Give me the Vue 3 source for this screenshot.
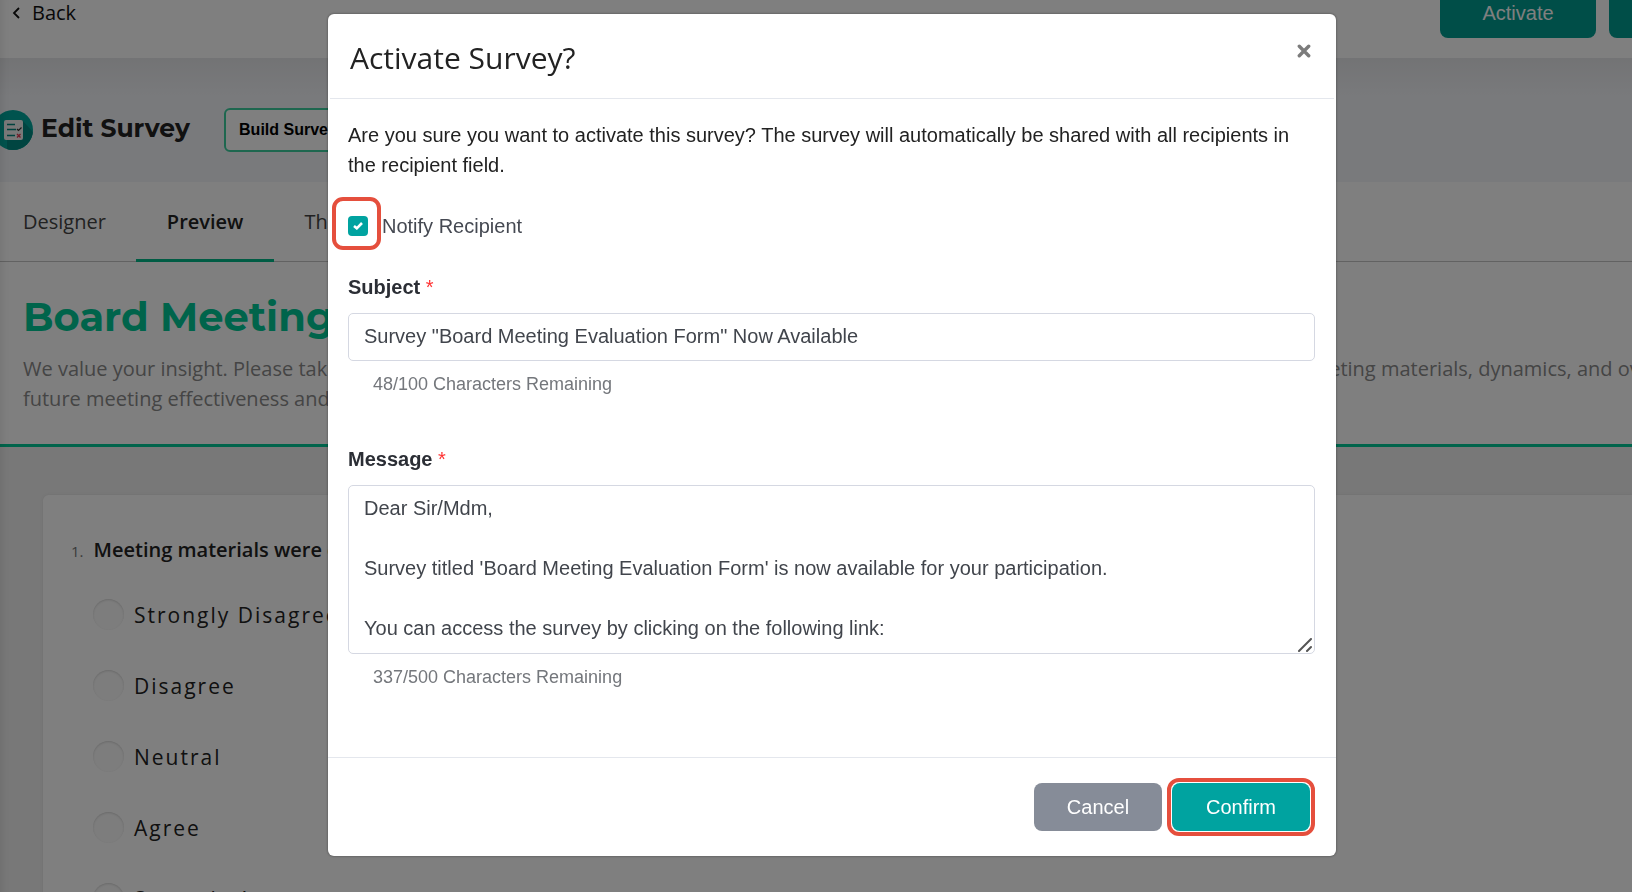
<script setup>
import { ref } from 'vue'

const notify = ref(true)
const subject = ref('Survey "Board Meeting Evaluation Form" Now Available')
const message = ref(
  "Dear Sir/Mdm,\n\nSurvey titled 'Board Meeting Evaluation Form' is now available for your participation.\n\nYou can access the survey by clicking on the following link:"
)
const answers = ['Strongly Disagree', 'Disagree', 'Neutral', 'Agree', 'Strongly Agree']
</script>

<template>
  <div class="page">
    <header class="topbar">
      <a class="back" href="#">
        <svg width="8" height="12" viewBox="0 0 8 12" fill="none" stroke="currentColor" stroke-width="1.800"><path d="M7 1 2 6 7 11" /></svg>
        Back
      </a>
      <div class="actions">
        <button class="btn teal" type="button">Activate</button>
        <button class="btn teal" type="button" aria-label="More actions"></button>
      </div>
    </header>

    <section class="band">
      <svg class="logo" width="40" height="40" viewBox="0 0 40 40">
        <defs><clipPath id="disc"><circle cx="20" cy="20" r="20" /></clipPath></defs>
        <g clip-path="url(#disc)">
          <rect width="40" height="40" fill="#00a69c" />
          <path d="M29 10 40 22V40H14V30Z" fill="#008a82" />
          <rect x="11" y="10" width="19" height="20" rx="2" fill="#f2f2f2" />
          <path d="M14 14.500h8M14 19.500h9M14 25.500h8" stroke="#00857d" stroke-width="1.500" fill="none" />
          <path d="m24 19 1.500 1.500 3-3" stroke="#333" stroke-width="1.200" fill="none" />
          <path d="m24 24 3.500 3.500m0-3.500L24 27.500" stroke="#e2344f" stroke-width="1.300" fill="none" />
        </g>
      </svg>
      <h1>Edit Survey</h1>
      <button class="build" type="button">Build Survey</button>
    </section>

    <nav class="tabs">
      <a href="#">Designer</a>
      <a href="#" class="active">Preview</a>
      <a href="#">Theme</a>
    </nav>

    <section class="intro">
      <h2>Board Meeting Evaluation Form</h2>
      <p>
        We value your insight. Please take a few minutes to complete the evaluation form today. Your feedback will help us to improve the board meeting materials, dynamics, and overall<br />
        future meeting effectiveness and governance.
      </p>
    </section>

    <section class="questions">
      <fieldset class="card">
        <legend><span>1.</span>Meeting materials were clear</legend>
        <label v-for="a in answers" :key="a" class="answer">
          <input type="radio" name="q1" :value="a" />{{ a }}
        </label>
      </fieldset>
    </section>
  </div>

  <div class="overlay">
    <div class="dialog" role="dialog" aria-modal="true" aria-labelledby="dialog-title">
      <header class="dialog-head">
        <h3 id="dialog-title">Activate Survey?</h3>
        <button class="close" type="button" aria-label="Close dialog">
          <svg width="14" height="14" viewBox="0 0 14 14" stroke="currentColor" stroke-width="3.400" stroke-linecap="round"><path d="m2.300 2.300 9.400 9.400m0-9.400-9.400 9.400" /></svg>
        </button>
      </header>

      <div class="dialog-body">
        <p>Are you sure you want to activate this survey? The survey will automatically be shared with all recipients in the recipient field.</p>

        <div class="notify">
          <span class="tick">
            <input id="notify" v-model="notify" type="checkbox" />
            <svg v-if="notify" width="10" height="8" viewBox="0 0 10 8" fill="none" stroke="#fff" stroke-width="2.600"><path d="M1 4 3.800 6.300 9 1" /></svg>
          </span>
          <label for="notify">Notify Recipient</label>
        </div>

        <label class="name" for="subject">Subject <span>*</span></label>
        <input id="subject" v-model="subject" class="field" type="text" />
        <p class="hint">48/100 Characters Remaining</p>

        <label class="name" for="message">Message <span>*</span></label>
        <div class="area">
          <textarea id="message" v-model="message" class="field"></textarea>
          <svg width="14" height="14" viewBox="0 0 14 14" stroke="#555" stroke-width="2" stroke-linecap="round"><path d="M1 13 13 1M9 13l4-4" /></svg>
        </div>
        <p class="hint">337/500 Characters Remaining</p>
      </div>

      <footer class="dialog-foot">
        <button class="btn grey" type="button">Cancel</button>
        <span class="ring"><button class="btn teal" type="button">Confirm</button></span>
      </footer>
    </div>
  </div>
</template>

<style>
body {
  overflow: hidden;
}
</style>

<style scoped>
* {
  box-sizing: border-box;
}
h1, h2, h3, p {
  margin: 0;
}
button, input, textarea {
  font-family: inherit;
}
.page {
  height: 100vh;
  overflow: hidden;
  background: #fff;
  color: #222;
  font-family: "Open Sans", "Noto Sans", sans-serif;
  font-size: 20px;
}
.topbar {
  height: 58px;
  padding: 0 0 20px 12px;
  display: flex;
  align-items: flex-end;
  justify-content: space-between;
}
.back {
  display: flex;
  align-items: center;
  gap: 12px;
  line-height: 30px;
  margin-bottom: 10px;
  color: #111;
  text-decoration: none;
}
.actions {
  display: flex;
  gap: 13px;
  margin-right: -133px;
}
.btn {
  height: 48px;
  border: 0;
  border-radius: 8px;
  color: #fff;
  font-family: "Liberation Sans", Arial, sans-serif;
  font-size: 20px;
}
.teal {
  background: #00a3a0;
}
.actions .btn {
  width: 156px;
  padding-bottom: 2px;
  background: #009c90;
}
.band {
  height: 124px;
  display: flex;
  align-items: center;
  padding-top: 20px;
  background: linear-gradient(#e6e7ea, #f3f5f9 40px);
}
.logo {
  margin: 0 8px 0 -7px;
}
h1 {
  font-family: Montserrat, Inter, sans-serif;
  font-size: 25px;
  font-weight: 700;
  line-height: 40px;
  margin-bottom: 4px;
}
.build {
  height: 44px;
  margin-left: 34px;
  padding: 0 13px;
  border: 2px solid #3ccf9f;
  border-radius: 6px;
  background: #fff;
  font-family: "Liberation Sans", Arial, sans-serif;
  font-size: 16px;
  font-weight: 700;
}
.tabs {
  height: 80px;
  display: flex;
  border-bottom: 1px solid #c4c4c4;
  padding-left: 23px;
}
.tabs a {
  height: 80px;
  padding: 0 30px;
  line-height: 80px;
  color: #444;
  text-decoration: none;
}
.tabs a:first-child {
  padding-left: 0;
}
.tabs .active {
  border-bottom: 3px solid #00b888;
  padding: 0 31px;
  color: #222;
  font-weight: 600;
}
.intro {
  height: 185px;
  padding: 30px 0 0 23px;
  border-bottom: 3px solid #00c896;
  white-space: nowrap;
}
h2 {
  color: #00c896;
  font-family: Montserrat, Inter, sans-serif;
  font-size: 40px;
  font-weight: 700;
  line-height: 50px;
}
.intro p {
  margin-top: 12px;
  color: #8a8a8a;
  line-height: 30px;
}
.questions {
  padding: 48px 0 0 43px;
  background: #f0f0f0;
}
.card {
  margin: 0;
  border: 0;
  border-radius: 6px 0 0 0;
  padding: 37px 28px;
  background: #fff;
  box-shadow: 0 0 3px #ddd;
}
.card legend {
  float: left;
  width: 100%;
  padding: 0;
  margin-bottom: 30px;
  line-height: 36px;
  font-weight: 600;
}
.card legend span {
  margin-right: 10px;
  color: #777;
  font-size: 15px;
  font-weight: 400;
}
.answer {
  clear: both;
  display: flex;
  align-items: center;
  gap: 10px;
  height: 31px;
  margin: 0 0 40px 22px;
  font-size: 21px;
  letter-spacing: 2px;
}
.answer input {
  appearance: none;
  width: 31px;
  height: 31px;
  margin: 0;
  border-radius: 50%;
  background: #fafafa;
  box-shadow: inset 0 1px 2px #d4d4d4;
}
.overlay {
  position: fixed;
  inset: 0;
  display: flex;
  justify-content: center;
  align-items: flex-start;
  padding: 14px 0 0 32px;
  background: rgba(0, 0, 0, 0.5);
  box-shadow: inset 12px 0 12px -12px rgba(0, 0, 0, 0.12);
  font-family: "Liberation Sans", Arial, sans-serif;
  font-size: 20px;
}
.dialog {
  width: 1008px;
  max-width: 94%;
  border-radius: 6px;
  background: #fff;
  box-shadow: 0 0 2px 1px rgba(0, 0, 0, 0.2);
}
.dialog-head {
  display: flex;
  justify-content: space-between;
  align-items: flex-start;
  margin: 0 2px;
  padding: 24px 17px 20px 20px;
  border-bottom: 1px solid #e4e7ed;
}
h3 {
  color: #222;
  font-family: "Open Sans", "Noto Sans", sans-serif;
  font-size: 30px;
  font-weight: 400;
  line-height: 40px;
}
.close {
  display: flex;
  padding: 6px;
  border: 0;
  background: none;
  color: #7c7c7c;
}
.dialog-body {
  padding: 21px 21px 65px 20px;
  color: #222;
}
.dialog-body p {
  line-height: 30px;
}
.notify {
  display: flex;
  align-items: center;
  gap: 14px;
  margin: 31px 0;
  line-height: 30px;
  color: #454952;
}
.tick {
  position: relative;
  display: flex;
  align-items: center;
  justify-content: center;
}
.tick input {
  appearance: none;
  width: 20px;
  height: 20px;
  margin: 0;
  border-radius: 4px;
  background: #00a3a0;
}
.tick svg {
  position: absolute;
  pointer-events: none;
}
.tick::after {
  content: "";
  position: absolute;
  inset: -19px -13px -14px -16px;
  border: 4px solid #e54f3d;
  border-radius: 11px;
  pointer-events: none;
}
.name {
  display: block;
  line-height: 30px;
  margin-bottom: 11px;
  color: #2b2e35;
  font-weight: 700;
}
.name span {
  color: #f33;
  font-weight: 400;
}
.field {
  display: block;
  width: 100%;
  height: 48px;
  padding: 0 15px 2px;
  border: 1px solid #d5d8e2;
  border-radius: 5px;
  background: #fff;
  color: #41454c;
  font-size: 20px;
}
.area {
  position: relative;
}
.area svg {
  position: absolute;
  right: 3px;
  bottom: 2px;
  pointer-events: none;
}
textarea.field {
  height: 169px;
  padding: 7px 15px;
  line-height: 30px;
  overflow: hidden;
  resize: none;
}
.dialog-body .hint {
  margin: 8px 25px 45px;
  color: #74777c;
  font-size: 18px;
}
.dialog-body .hint:last-child {
  margin-bottom: 0;
}
.dialog-foot {
  display: flex;
  justify-content: flex-end;
  align-items: center;
  gap: 5px;
  padding: 20px 21px;
  border-top: 1px solid #e4e7ed;
}
.grey {
  width: 128px;
  background: #868c98;
}
.ring {
  display: flex;
  padding: 1px;
  border: 4px solid #e54f3d;
  border-radius: 12px;
}
.ring .btn {
  width: 138px;
}
</style>
